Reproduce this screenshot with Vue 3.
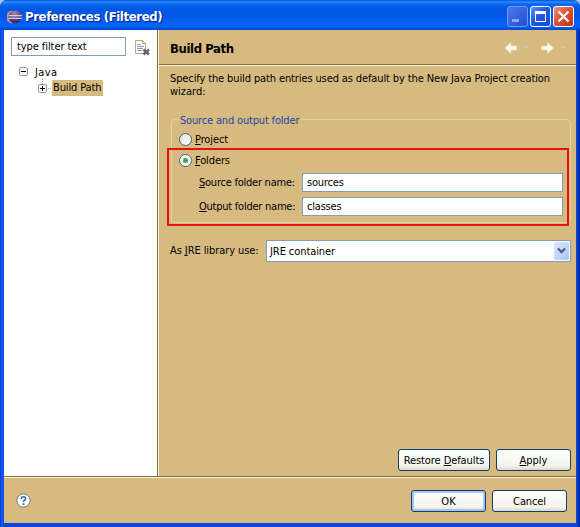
<script setup>
import { ref } from 'vue'

const filter = ref('type filter text')
const mode = ref('folders')
const source = ref('sources')
const output = ref('classes')
</script>

<template>
  <div class="window">
    <header class="titlebar">
      <svg class="logo" width="16" height="16" viewBox="0 0 16 16">
        <defs>
          <radialGradient id="orb" cx=".45" cy=".2" r=".85">
            <stop offset="0" stop-color="#a08aa8" />
            <stop offset=".5" stop-color="#5f4a88" />
            <stop offset="1" stop-color="#2a2268" />
          </radialGradient>
        </defs>
        <path d="M5.500 1.500A6.500 6.500 0 0 0 5.500 14.500Z" fill="#b9929c" />
        <ellipse cx="8.200" cy="8" rx="6.800" ry="6.500" fill="url(#orb)" />
        <path d="M1.500 6.600h13.500M1.500 9.400h13.500" stroke="#d5cbe6" stroke-width="1.200" />
      </svg>
      <span class="title">Preferences (Filtered)</span>
      <div class="controls">
        <div class="ctl dim"><svg width="19" height="19"><path d="M4 13.500h7" stroke="#8fa8ee" stroke-width="3" /></svg></div>
        <div class="ctl"><svg width="19" height="19"><path d="M4.500 4.500h10v10h-10z" fill="none" stroke="#fff" /><path d="M4 5.500h11" stroke="#fff" stroke-width="3" /></svg></div>
        <div class="ctl close"><svg width="19" height="19"><path d="M4.500 4.500l10 10M14.500 4.500l-10 10" stroke="#fff" stroke-width="2.200" /></svg></div>
      </div>
    </header>

    <div class="body">
      <aside class="side">
        <div class="search">
          <div class="field filter"><span class="t-filter">{{ filter }}</span></div>
          <svg class="clear" width="16" height="16" viewBox="0 0 16 16">
            <path d="M.5 .5h7l3 3v10h-10z" fill="#fffef0" stroke="#b3a77c" />
            <path d="M7.500 .5v3h3" fill="#e9dfb5" stroke="#b3a77c" />
            <path d="M2 4.500h4M2 6.500h7M2 8.500h6M2 10.500h5" stroke="#7f9cc8" />
            <path d="M8.500 9.500l5.500 5M14 9.500l-5.500 5" stroke="#666" stroke-width="2.600" />
          </svg>
        </div>
        <div class="node root">
          <svg width="10" height="10"><rect x=".5" y=".5" width="8" height="8" rx="1" fill="#f4f3ee" stroke="#8795a8" /><path d="M2 4.500h5" stroke="#000" /></svg>
          <span class="t-java">Java</span>
        </div>
        <div class="node child">
          <svg width="14" height="18"><path d="M4.500 0v5M10 9.500h4" stroke="#999" stroke-dasharray="1 1" /><rect x=".5" y="5.500" width="8" height="8" rx="1" fill="#f4f3ee" stroke="#8795a8" /><path d="M2 9.500h5M4.500 7v5" stroke="#000" /></svg>
          <span class="selected"><span class="t-bp">Build Path</span></span>
        </div>
      </aside>

      <main class="page">
        <div class="heading">
          <h1>Build Path</h1>
          <svg class="nav" width="64" height="14" viewBox="0 0 64 14">
            <path d="M1 7l6-5.500v3.500h5.500v4h-5.500v3.500z" fill="#faf7f0" stroke="#e9dec5" stroke-width=".7" />
            <path d="M49.500 7l-6-5.500v3.500h-6v4h6v3.500z" fill="#faf7f0" stroke="#e9dec5" stroke-width=".7" />
            <path d="M20.500 5.500h5l-2.500 2.500zM56.500 5.500h5l-2.500 2.500z" fill="#d3cab8" />
          </svg>
        </div>
        <div class="content">
          <p class="intro"><span class="t-intro">Specify the build path entries used as default by the New Java Project creation</span><br /><span class="t-wiz">wizard:</span></p>
          <section class="group">
            <div class="legend"><span class="t-legend">Source and output folder</span></div>
            <div class="option first"><i class="radio" :class="{ on: mode === 'project' }"></i><span class="t-proj"><u>P</u>roject</span></div>
            <div class="option"><i class="radio" :class="{ on: mode === 'folders' }"></i><span class="t-fold"><u>F</u>olders</span></div>
            <div class="row"><label><span class="t-label"><u>S</u>ource folder name:</span></label><div class="field"><span class="t-val">{{ source }}</span></div></div>
            <div class="row"><label><span class="t-label"><u>O</u>utput folder name:</span></label><div class="field"><span class="t-val">{{ output }}</span></div></div>
            <div class="highlight"></div>
          </section>
          <div class="jre">
            <label><span class="t-jre">As <u>J</u>RE library use:</span></label>
            <div class="combo">
              <span class="t-cont">JRE container</span>
              <span class="drop"><svg width="15" height="17"><path d="M4 6.500l3.500 3.500l3.500-3.500" fill="none" stroke="#4d6185" stroke-width="2.400" /></svg></span>
            </div>
          </div>
          <div class="actions">
            <button class="btn restore"><span class="t-rest">Restore <u>D</u>efaults</span></button>
            <button class="btn"><span class="t-apply"><u>A</u>pply</span></button>
          </div>
        </div>
      </main>
    </div>

    <footer class="footer">
      <svg width="15" height="15" viewBox="0 0 15 15">
        <circle cx="7.500" cy="7.500" r="6.600" fill="#fff" stroke="#6d7d92" />
        <path d="M5.300 6V5.200Q5.500 3.800 7.500 3.800T9.700 5.500Q9.700 6.500 8.500 7.200T7.500 9" fill="none" stroke="#3c659b" stroke-width="1.600" />
        <path d="M7.500 10.200v1.800" stroke="#3c659b" stroke-width="1.800" />
      </svg>
      <button class="btn default"><span class="t-ok">OK</span></button>
      <button class="btn"><span class="t-cancel">Cancel</span></button>
    </footer>
  </div>
</template>

<style>
body { margin: 0; background: #b4bfe6; overflow: hidden; }
</style>

<style scoped>
* { box-sizing: border-box; }
.window {
  width: 580px; height: 527px; padding: 0 4px 4px; display: flex; flex-direction: column;
  border-radius: 7px 7px 0 0; overflow: hidden;
  background: linear-gradient(90deg, #0831d9 0, #1660ee 2px, #0549dd 4px, #0549dd 576px, #0a45d5 577px, #001ea0 580px);
  font: 11px/13px "DejaVu Sans Condensed", "DejaVu Sans", sans-serif; color: #000;
}
span { white-space: nowrap; }
u { text-decoration: underline; text-underline-offset: 1px; text-decoration-thickness: 1px; text-decoration-skip-ink: none; }
.t-filter, .t-rest, .t-cont, .t-jre { letter-spacing: -0.08px; }
.t-java { letter-spacing: 0.4px; }
.t-intro { letter-spacing: -0.117px; }
.t-bp, .t-proj, .t-fold, .t-cancel { letter-spacing: -0.12px; }
.t-legend { letter-spacing: -0.17px; }
.t-label { letter-spacing: -0.24px; }
.t-val { letter-spacing: -0.2px; }
.titlebar {
  height: 30px; flex: none; margin: 0 -4px; padding: 0 6px; display: flex; align-items: center;
  background: linear-gradient(#0850d8 0, #2b8bff 2px, #0a6af4 4px, #0359e6 8px, #0257e5 16px, #0264fa 24px, #0260f3 27px, #0144cc 30px);
}
.logo { margin: 3px 2px 0 1px; }
.title { margin-top: 4px; font: bold 13px/16px "DejaVu Sans Condensed", sans-serif; letter-spacing: -0.38px; color: #fff; text-shadow: 1px 1px 1px #0a1883; }
.controls { display: flex; gap: 2px; margin: 3px 0 0 auto; }
.ctl { width: 21px; height: 21px; border: 1px solid #fff; border-radius: 3px; background: linear-gradient(135deg, #6690f5, #2157df 45%, #1a4bd0); }
.ctl svg { display: block; }
.dim { border-color: #7797ec; background: linear-gradient(135deg, #4d78ed, #1e4fd4); }
.close { background: linear-gradient(135deg, #ee9778, #de5232 45%, #bd3413); }
.body { display: flex; height: 446px; flex: none; }
.side { width: 154px; flex: none; background: #fff; border-right: 1px solid #8b6c3a; padding: 7px 0 0 7px; }
.search { display: flex; gap: 9px; align-items: center; height: 19px; }
.clear { margin-top: 2px; }
.field { background: #fff; border: 1px solid #7f9db9; height: 19px; line-height: 17px; padding-left: 4px; flex: 1; }
.filter { flex: none; width: 115px; padding-left: 5px; }
.node { display: flex; align-items: center; height: 16px; }
.root { margin: 8px 0 0 8px; gap: 6px; }
.child { margin-left: 27px; }
.selected { background: #d7ba80; height: 16px; width: 51px; line-height: 16px; padding-left: 1px; }
.page { flex: 1; min-width: 0; background: #d7ba80; border-left: 1px solid #fff7e2; }
.heading { height: 36px; padding: 2px 11px 0 11px; display: flex; align-items: center; justify-content: space-between; border-bottom: 1px solid #fff7e2; box-shadow: inset 0 -1px 0 #8b6c3a; }
h1 { margin: 0; font: bold 13px/16px "DejaVu Sans Condensed", sans-serif; letter-spacing: -0.4px; }
.nav { margin: 0 -3px 2px 0; }
.content { height: 410px; padding: 6px 5px 0 11px; display: flex; flex-direction: column; }
.intro { margin: 0; height: 26px; }
.group { position: relative; width: 400px; height: 104px; margin: 21px 0 0 1px; border: 1px solid #e3d1a7; border-radius: 4px; padding: 0 7px; }
.legend { width: fit-content; height: 13px; margin: -6px 0 0; padding: 0 2px 0 1px; background: #d7ba80; color: #2344a8; }
.option { display: flex; align-items: center; gap: 3px; height: 13px; margin-bottom: 8px; }
.first { margin-top: 6px; }
.radio { width: 13px; height: 13px; border: 1px solid #3b6288; border-radius: 50%; background: linear-gradient(135deg, #e4e3dc, #fff); }
.radio.on { background: radial-gradient(circle at center, #38a838 0 2px, transparent 3px), #fff; }
.row { display: flex; height: 19px; line-height: 20px; margin-bottom: 5px; padding-left: 20px; }
.option + .row { margin-top: -2px; }
.row label { width: 103px; flex: none; }
.highlight { position: absolute; left: -5px; top: 28px; width: 402px; height: 78px; border: 2px solid #e9110b; }
.jre { display: flex; height: 22px; margin-top: 17px; line-height: 22px; }
.jre label { width: 96px; }
.combo { width: 305px; height: 22px; background: #fff; border: 1px solid #7f9db9; padding: 1px 1px 1px 3px; display: flex; justify-content: space-between; line-height: 19px; }
.drop { width: 15px; height: 18px; border-radius: 2px; background: linear-gradient(135deg, #dce6ff, #aec4f5); }
.actions { display: flex; gap: 6px; margin: auto 0 5px; justify-content: flex-end; }
.btn { font: inherit; color: #000; width: 75px; height: 22px; padding: 0; border: 1px solid #0f3d6e; border-radius: 3px; background: linear-gradient(#fff, #f4f3ec 80%, #dcd7ca); text-align: center; flex: none; }
.restore { width: 92px; }
.default { box-shadow: inset 0 0 0 2px #a9c3f2; }
.footer { height: 47px; flex: none; background: #d7ba80; border-top: 1px solid #8b6c3a; box-shadow: inset 0 1px 0 #fff7e2; display: flex; align-items: center; gap: 6px; padding: 2px 9px 0 12px; }
.footer svg { margin: 0 auto 2px 0; }
</style>
